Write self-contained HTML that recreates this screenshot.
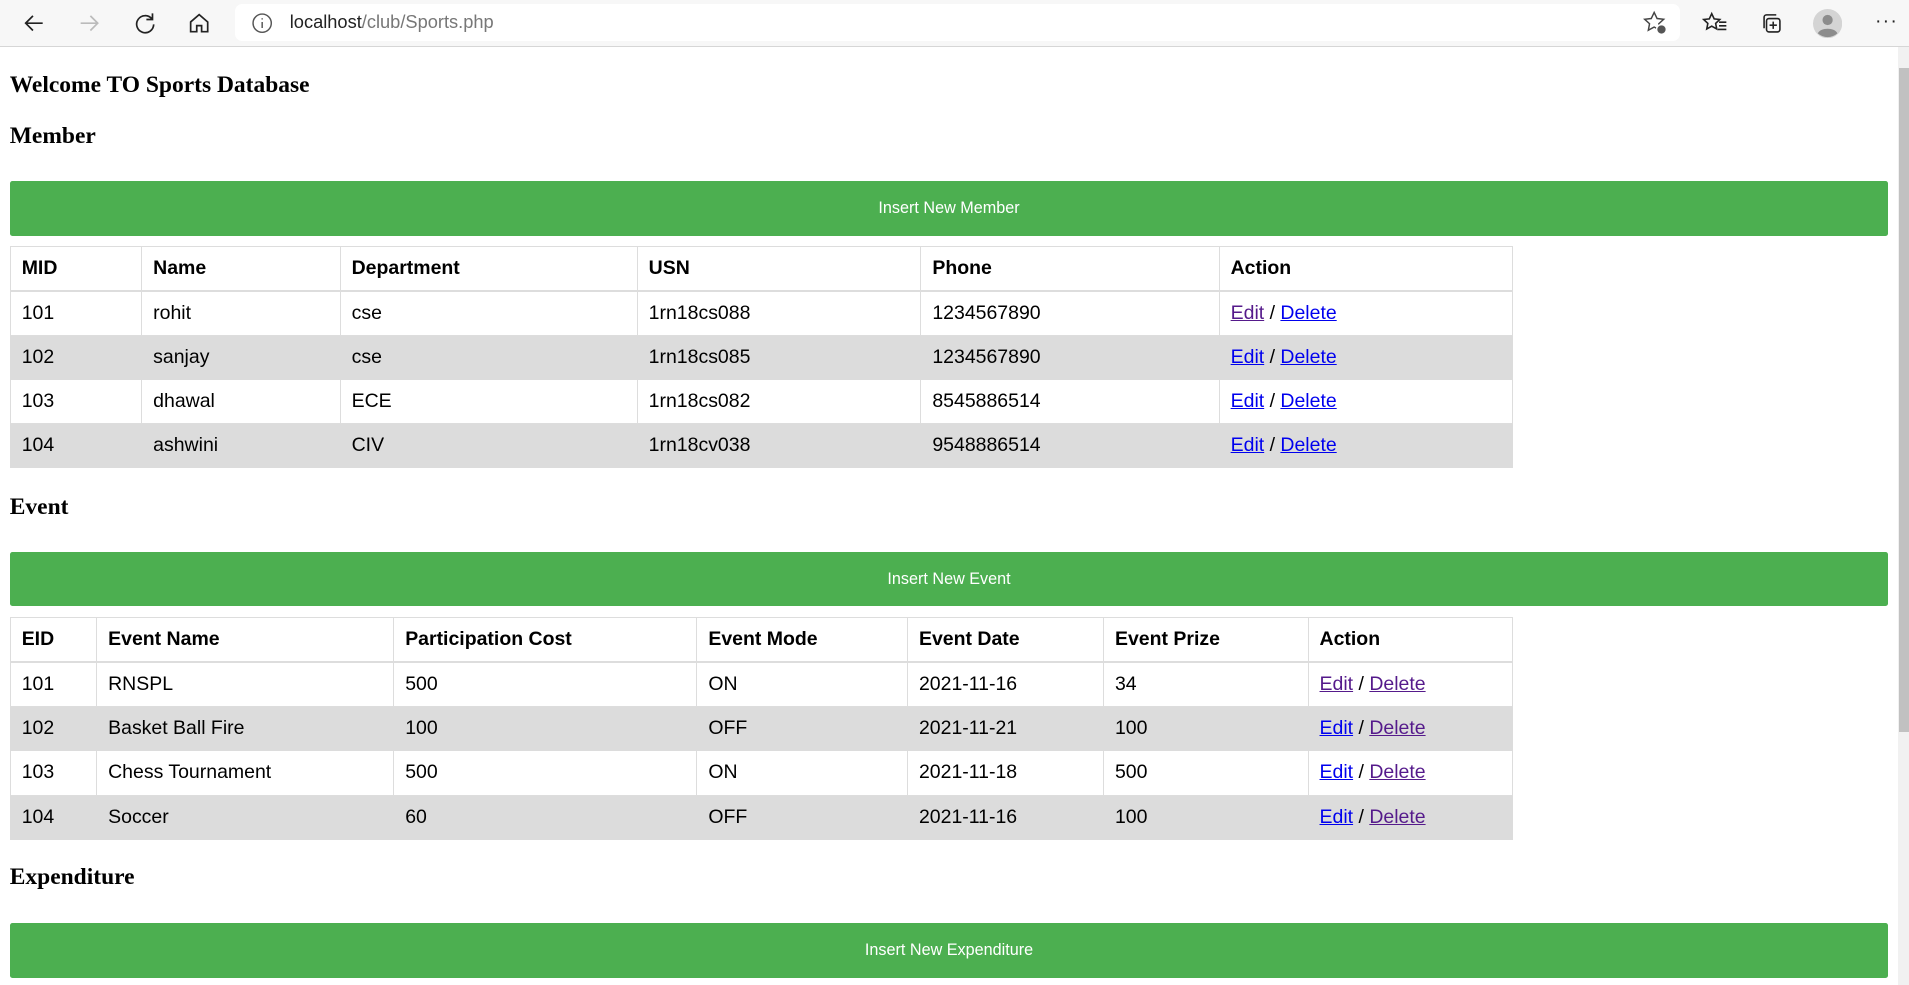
<!DOCTYPE html>
<html><head><meta charset="utf-8"><style>
html{zoom:1.2175}
body{margin:0;width:1568px;height:809px;overflow:hidden;position:relative;background:#fff;font-family:"Liberation Sans",Arial,sans-serif}
.bar{position:absolute;left:0;top:0;width:1568px;height:38px;background:#f7f7f7;border-bottom:1px solid #d6d6d6}
.addr{position:absolute;left:193px;top:3px;width:1187px;height:31px;background:#fff;border-radius:6px}
.url{position:absolute;left:238px;top:9px;font-size:15px;color:#222}
.url span{color:#777}
.ic{position:absolute}
.sb{position:absolute;left:1559px;top:39px;width:9px;height:770px;background:#f1f1f1}
.sb div{position:absolute;left:1px;top:17px;width:8px;height:545px;background:#c1c1c1}
h3{position:absolute;left:8px;margin:0;font-family:"Liberation Serif",serif;font-size:19.3px;font-weight:bold}
.btn{position:absolute;left:8px;width:1543px;height:45px;background:#4CAF50;color:#fff;font-size:13.3px;text-align:center;line-height:45px;border-radius:2px}
table{position:absolute;left:8px;border-collapse:collapse;font-size:16px;width:1235px}
td,th{border:1px solid #ddd;height:36.4px;padding:0 9px;text-align:left;box-sizing:border-box}
th{font-weight:bold;border-bottom:2px solid #ddd}
tr.g td{background:#dcdcdc;border-color:#dcdcdc}
a{color:#0000ee}a.v{color:#551a8b}
</style></head><body>
<div class="bar">
<svg class="ic" style="left:18px;top:9px" width="20" height="20" viewBox="0 0 20 20" fill="none" stroke="#222" stroke-width="1.4"><path d="M17 10H3M9 4L3 10l6 6"/></svg>
<svg class="ic" style="left:63px;top:9px" width="20" height="20" viewBox="0 0 20 20" fill="none" stroke="#bbb" stroke-width="1.4"><path d="M3 10h14M11 4l6 6-6 6"/></svg>
<svg class="ic" style="left:109px;top:9px" width="20" height="20" viewBox="0 0 20 20" fill="none" stroke="#222" stroke-width="1.4"><path d="M15.5 6.5A7 7 0 1 0 17 11"/><path d="M16 2v5h-5"/></svg>
<svg class="ic" style="left:154px;top:9px" width="20" height="20" viewBox="0 0 20 20" fill="none" stroke="#222" stroke-width="1.4"><path d="M3 9l7-6 7 6v8h-5v-5H8v5H3z"/></svg>
<div class="addr"></div>
<svg class="ic" style="left:205px;top:9px" width="20" height="20" viewBox="0 0 20 20" fill="none" stroke="#555" stroke-width="1.2"><circle cx="10" cy="10" r="7.5"/><path d="M10 9v5M10 6v1"/></svg>
<div class="url">localhost<span>/club/Sports.php</span></div>
<svg class="ic" style="left:1349px;top:8px" width="22" height="22" viewBox="0 0 22 22" fill="none" stroke="#444" stroke-width="1.2"><path d="M10 2l2.4 5 5.4.6-4 3.7 1 5.3L10 14l-4.8 2.6 1-5.3-4-3.7 5.4-.6z"/><circle cx="16" cy="16" r="4" fill="#555" stroke="#fff"/></svg>
<svg class="ic" style="left:1398px;top:8px" width="22" height="22" viewBox="0 0 22 22" fill="none" stroke="#222" stroke-width="1.3"><path d="M8 3l2 4.3 4.6.5-3.4 3.2.9 4.6L8 13.3l-4.1 2.3.9-4.6L1.4 7.8 6 7.3z"/><path d="M14 10h6M14 13h6M13 16h7"/></svg>
<svg class="ic" style="left:1444px;top:8px" width="22" height="22" viewBox="0 0 22 22" fill="none" stroke="#222" stroke-width="1.3"><rect x="7" y="7" width="11" height="11" rx="2"/><path d="M5 15V6a2 2 0 0 1 2-2h8M12.5 9.5v6M9.5 12.5h6"/></svg>
<svg class="ic" style="left:1489px;top:7px" width="24" height="24" viewBox="0 0 24 24"><circle cx="12" cy="12" r="12" fill="#d4d4d4"/><circle cx="12" cy="9" r="4.2" fill="#8c8c8c"/><path d="M4 20c2-5 14-5 16 0a12 12 0 0 1-16 0z" fill="#8c8c8c"/></svg>
<div class="ic" style="left:1540px;top:8px;font-size:16px;color:#222;letter-spacing:1px">···</div>
</div>
<div class="sb"><div></div></div>

<h3 style="top:59px">Welcome TO Sports Database</h3>
<h3 style="top:101px">Member</h3>
<div class="btn" style="top:149px">Insert New Member</div>
<table style="top:202px">
<colgroup><col style="width:108px"><col style="width:163px"><col style="width:244px"><col style="width:233px"><col style="width:245px"><col></colgroup>
<tr><th>MID</th><th>Name</th><th>Department</th><th>USN</th><th>Phone</th><th>Action</th></tr>
<tr><td>101</td><td>rohit</td><td>cse</td><td>1rn18cs088</td><td>1234567890</td><td><a class="v" href="#">Edit</a> / <a href="#">Delete</a></td></tr>
<tr class="g"><td>102</td><td>sanjay</td><td>cse</td><td>1rn18cs085</td><td>1234567890</td><td><a href="#">Edit</a> / <a href="#">Delete</a></td></tr>
<tr><td>103</td><td>dhawal</td><td>ECE</td><td>1rn18cs082</td><td>8545886514</td><td><a href="#">Edit</a> / <a href="#">Delete</a></td></tr>
<tr class="g"><td>104</td><td>ashwini</td><td>CIV</td><td>1rn18cv038</td><td>9548886514</td><td><a href="#">Edit</a> / <a href="#">Delete</a></td></tr>
</table>

<h3 style="top:406px">Event</h3>
<div class="btn" style="top:453px">Insert New Event</div>
<table style="top:507px">
<colgroup><col style="width:71px"><col style="width:244px"><col style="width:249px"><col style="width:173px"><col style="width:161px"><col style="width:168px"><col></colgroup>
<tr><th>EID</th><th>Event Name</th><th>Participation Cost</th><th>Event Mode</th><th>Event Date</th><th>Event Prize</th><th>Action</th></tr>
<tr><td>101</td><td>RNSPL</td><td>500</td><td>ON</td><td>2021-11-16</td><td>34</td><td><a class="v" href="#">Edit</a> / <a class="v" href="#">Delete</a></td></tr>
<tr class="g"><td>102</td><td>Basket Ball Fire</td><td>100</td><td>OFF</td><td>2021-11-21</td><td>100</td><td><a href="#">Edit</a> / <a class="v" href="#">Delete</a></td></tr>
<tr><td>103</td><td>Chess Tournament</td><td>500</td><td>ON</td><td>2021-11-18</td><td>500</td><td><a href="#">Edit</a> / <a class="v" href="#">Delete</a></td></tr>
<tr class="g"><td>104</td><td>Soccer</td><td>60</td><td>OFF</td><td>2021-11-16</td><td>100</td><td><a href="#">Edit</a> / <a class="v" href="#">Delete</a></td></tr>
</table>

<h3 style="top:710px">Expenditure</h3>
<div class="btn" style="top:758px">Insert New Expenditure</div>
</body></html>
